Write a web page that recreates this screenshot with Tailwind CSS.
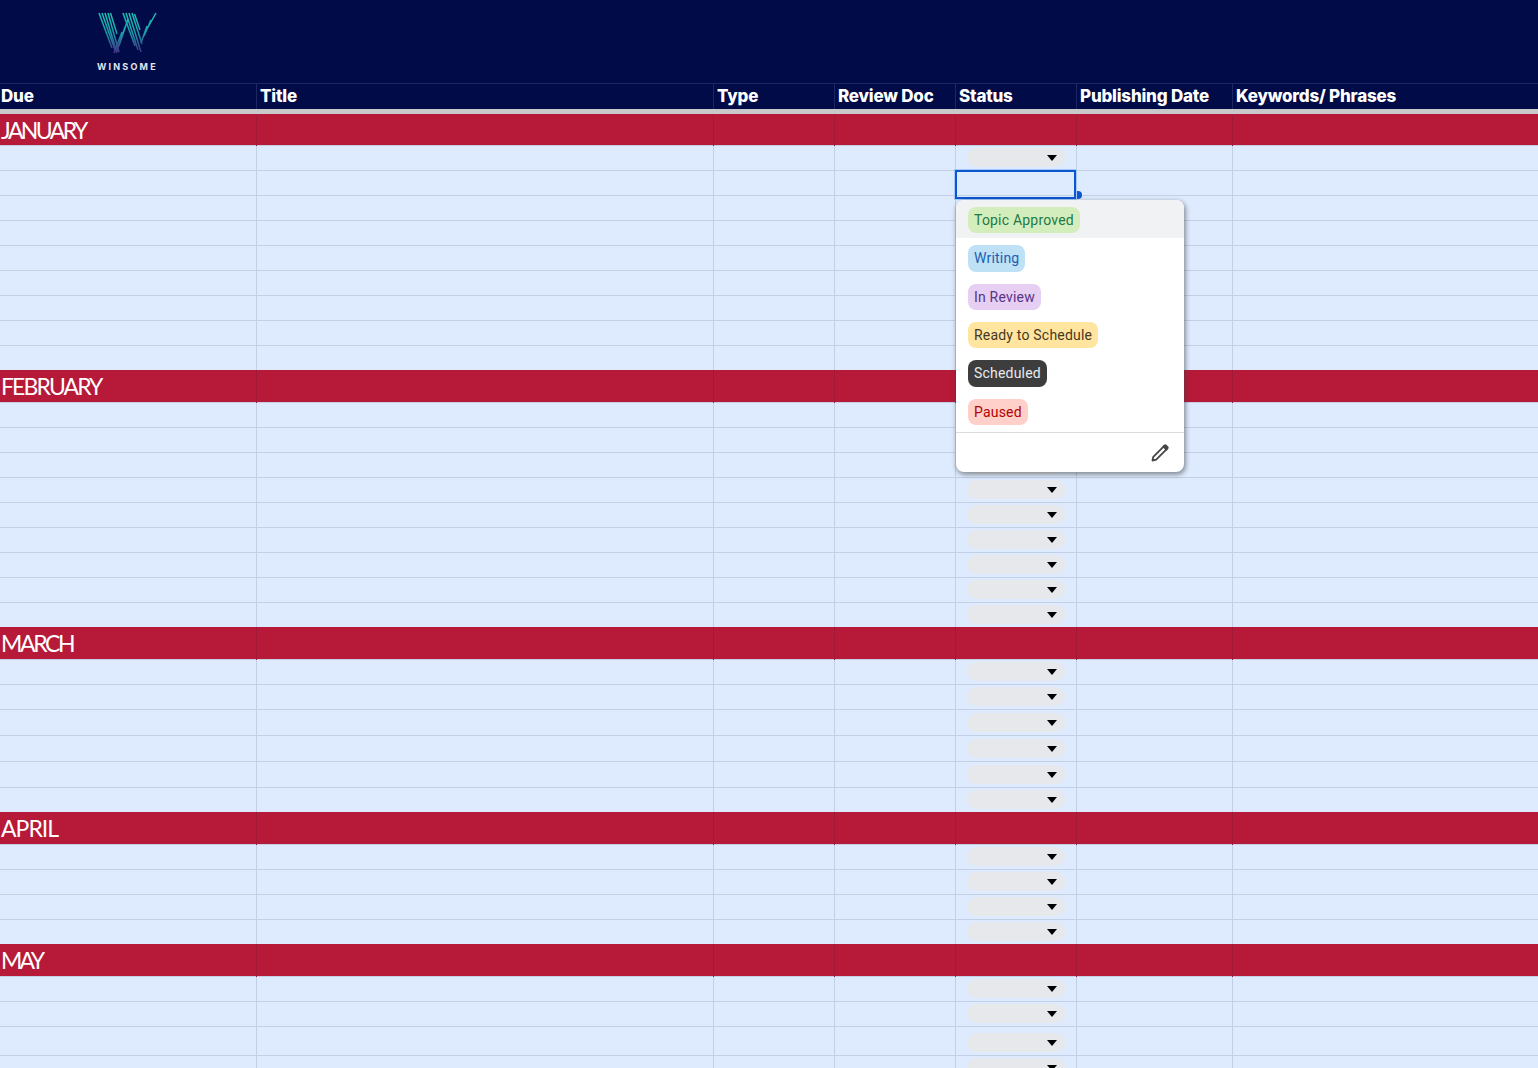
<!DOCTYPE html>
<html lang="en">
  <head>
    <meta charset="UTF-8" />
    <title>Content Calendar</title>
    <script src="https://cdn.jsdelivr.net/npm/@tailwindcss/browser@4"></script>
  </head>
  <body class="bg-[#deeafd] h-[1068px] overflow-hidden relative font-['Roboto',sans-serif]">
    <!-- logo band -->
    <div class="h-[84px] bg-[#010b47] border-b border-[#1c2662] pl-[97px] pt-[12px]">
      <svg class="block" width="60" height="43" viewBox="0 0 60 43" fill="none" stroke-width="1.500">
        <defs>
          <linearGradient id="wg" x1="0" y1="0" x2="0" y2="43" gradientUnits="userSpaceOnUse">
            <stop offset="0" stop-color="#1fc4b6" />
            <stop offset="0.5" stop-color="#1a9aa6" />
            <stop offset="0.8" stop-color="#35508f" />
            <stop offset="1" stop-color="#4b2f8f" />
          </linearGradient>
        </defs>
        <g stroke="url(#wg)">
          <path d="M2 1 L15 36 M5 1 L18 38 M8 1 L20 41 M11 1 L22 40 M13.500 1 L20 22" />
          <path d="M17 41 L25 20 M19.500 40 L28 15 M22 34 L31 7" />
          <path d="M26 1 L38 34 M29 1 L41 38 M32 1 L44 40 M35 1 L45 32 M37.500 2 L43 18" />
          <path d="M44 31 L50 14 M47 24 L54 8 M50 17 L59 1" />
        </g>
      </svg>
      <div class="mt-[7px] text-[9px] leading-[10px] font-bold tracking-[2.200px] text-[#e3e6f0] font-['Inter',sans-serif]">WINSOME</div>
    </div>

    <!-- column headers -->
    <div class="h-[25px] bg-[#010b47] grid grid-cols-[257px_457px_121px_121px_121px_156px_1fr] text-white text-[17px] leading-[25px] font-extrabold tracking-[-0.2px] font-['Inter',sans-serif]">
      <div class="border-r border-[#1c2662] pl-[1px]">Due</div>
      <div class="border-r border-[#1c2662] pl-[3px]">Title</div>
      <div class="border-r border-[#1c2662] pl-[3px]">Type</div>
      <div class="border-r border-[#1c2662] pl-[3px]">Review Doc</div>
      <div class="border-r border-[#1c2662] pl-[3px]">Status</div>
      <div class="border-r border-[#1c2662] pl-[3px]">Publishing Date</div>
      <div class="pl-[3px]">Keywords/ Phrases</div>
    </div>
    <div class="h-[5px] bg-[#c9c9cc]"></div>

    <div id="sheet"></div>

    <!-- selected cell -->
    <div class="absolute left-[955px] top-[170px] w-[121px] h-[29px] border-2 border-[#0b57d0] outline outline-1 outline-[#a8c7fa]"></div>
    <div class="absolute left-[1077px] top-[191px] w-[5px] h-[8px] rounded-r-full bg-[#0b57d0]"></div>

    <!-- status dropdown -->
    <div class="absolute left-[956px] top-[200px] w-[228px] h-[272px] bg-white rounded-lg shadow-[1px_2px_4px_1px_rgba(60,64,67,0.5)] overflow-hidden text-[14px] leading-[20px] tracking-[0.2px]">
      <div class="h-[38px] bg-[#f1f2f4] pl-[12px] pt-[7px]">
        <span class="inline-block h-[26px] px-[6px] py-[3px] rounded-[8px] bg-[#d4edbc] text-[#1e7a45]">Topic Approved</span>
      </div>
      <div class="h-[39px] pl-[12px] pt-[7px]">
        <span class="inline-block h-[27px] px-[6px] py-[3px] rounded-[8px] bg-[#bfe1f6] text-[#1a5fb4]">Writing</span>
      </div>
      <div class="h-[38px] pl-[12px] pt-[7px]">
        <span class="inline-block h-[26px] px-[6px] py-[3px] rounded-[8px] bg-[#e6cff2] text-[#5a3286]">In Review</span>
      </div>
      <div class="h-[38px] pl-[12px] pt-[7px]">
        <span class="inline-block h-[26px] px-[6px] py-[3px] rounded-[8px] bg-[#ffe5a0] text-[#473821]">Ready to Schedule</span>
      </div>
      <div class="h-[39px] pl-[12px] pt-[7px]">
        <span class="inline-block h-[27px] px-[6px] py-[3px] rounded-[8px] bg-[#3d3d3d] text-[#e8eaed]">Scheduled</span>
      </div>
      <div class="h-[40px] pl-[12px] pt-[7px]">
        <span class="inline-block h-[26px] px-[6px] py-[3px] rounded-[8px] bg-[#ffcfc9] text-[#b10202]">Paused</span>
      </div>
      <div class="border-t border-[#dadce0] h-[40px] flex justify-end items-center pr-[15px]">
        <svg width="18" height="18" viewBox="0 0 18 18" fill="none" stroke="#444746" stroke-width="1.800" stroke-linejoin="round">
          <path d="M1.500 16.500 L2.300 12.800 L12.800 2.300 L15.700 5.200 L5.200 15.700 Z" />
          <path d="M12.500 2.600 L13.600 1.500 Q14.200 1 14.800 1.500 L16.500 3.200 Q17 3.800 16.500 4.400 L15.400 5.500 Z" fill="#444746" />
        </svg>
      </div>
    </div>

    <script>
      const sections = [
        { name: "JANUARY", h: 31, track: "tracking-[-2.600px]", rows: [25, 25, 25, 25, 25, 25, 25, 25, 25] },
        { name: "FEBRUARY", h: 32, track: "tracking-[-1.900px]", rows: [25, 25, 25, 25, 25, 25, 25, 25, 25] },
        { name: "MARCH", h: 32, track: "tracking-[-2.400px]", rows: [25, 25, 26, 26, 26, 25] },
        { name: "APRIL", h: 32, track: "tracking-[-1px]", rows: [25, 25, 25, 25] },
        { name: "MAY", h: 32, track: "tracking-[-2.800px]", rows: [25, 25, 29, 25] },
      ];

      const line = "border-r border-[#c2cfe4]";
      const redLine = "border-r border-[#9f1a38]";
      const cols = "grid grid-cols-[257px_457px_121px_121px_121px_156px_1fr]";

      const chip = `
        <div class="ml-[11px] mb-[3px] w-[98px] h-[19px] rounded-full bg-[#e7e8ec] flex items-center justify-end pr-[8px]">
          <svg width="10" height="6" viewBox="0 0 10 6"><path d="M0 0 H10 L5 6 Z" fill="#000" /></svg>
        </div>`;

      let html = "";
      sections.forEach((s) => {
        html += `
          <div class="${cols} bg-[#b71938]" style="height:${s.h}px">
            <div class="${redLine} pl-[1px] text-white text-[23px] leading-[33px] ${s.track} font-['Lato',sans-serif]">${s.name}</div>
            <div class="${redLine}"></div><div class="${redLine}"></div><div class="${redLine}"></div>
            <div class="${redLine}"></div><div class="${redLine}"></div><div></div>
          </div>`;
        s.rows.forEach((h, i) => {
          // the second January row is the selected, still empty cell
          const isSelected = s.name === "JANUARY" && i === 1;
          html += `
            <div class="${cols} border-t border-[#c2cfe4]" style="height:${h}px">
              <div class="${line}"></div><div class="${line}"></div><div class="${line}"></div><div class="${line}"></div>
              <div class="${line} flex items-end">${isSelected ? "" : chip}</div>
              <div class="${line}"></div><div></div>
            </div>`;
        });
      });
      document.getElementById("sheet").innerHTML = html;
    </script>
  </body>
</html>
